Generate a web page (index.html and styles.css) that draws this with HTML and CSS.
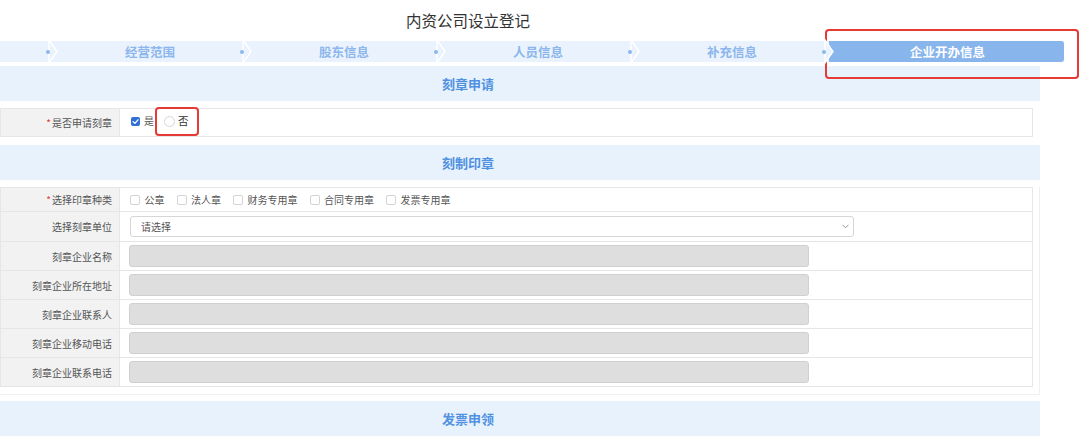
FILE: index.html
```html
<!DOCTYPE html>
<html lang="zh-CN">
<head>
<meta charset="utf-8">
<title>内资公司设立登记</title>
<link rel="stylesheet" href="styles.css">
</head>
<body>
<div class="title">内资公司设立登记</div>

<div class="steps">
  <div class="step lead"><i class="dot"></i><svg class="chev" viewBox="0 0 11 21" width="11" height="21"><polygon points="2,-1 10,10.5 2,22" /></svg></div>
  <div class="step"><span>经营范围</span><i class="dot"></i><svg class="chev" viewBox="0 0 11 21" width="11" height="21"><polygon points="2,-1 10,10.5 2,22" /></svg></div>
  <div class="step"><span>股东信息</span><i class="dot"></i><svg class="chev" viewBox="0 0 11 21" width="11" height="21"><polygon points="2,-1 10,10.5 2,22" /></svg></div>
  <div class="step"><span>人员信息</span><i class="dot"></i><svg class="chev" viewBox="0 0 11 21" width="11" height="21"><polygon points="2,-1 10,10.5 2,22" /></svg></div>
  <div class="step"><span>补充信息</span><i class="dot"></i><svg class="chev" viewBox="0 0 11 21" width="11" height="21"><polygon points="2,-1 10,10.5 2,22" /></svg></div>
  <div class="step active"><span>企业开办信息</span></div>
</div>

<div class="sec-head head-1">刻章申请</div>
<div class="form form-1">
  <div class="row">
    <div class="label"><em>*</em>是否申请刻章</div>
    <div class="field opts-1">
      <span class="cb checked"><svg viewBox="0 0 9 9" width="9" height="9"><polyline points="2,4.6 3.9,6.4 7,2.8" /></svg></span>
      <span class="opt-text">是</span>
      <span class="annot"><span class="radio"></span><span class="opt-text">否</span></span>
    </div>
  </div>
</div>

<div class="sec-head head-2">刻制印章</div>
<div class="wrap">
  <div class="form">
    <div class="row r-opts">
      <div class="label"><em>*</em>选择印章种类</div>
      <div class="field opts">
        <span class="opt"><span class="cb"></span>公章</span>
        <span class="opt"><span class="cb"></span>法人章</span>
        <span class="opt"><span class="cb"></span>财务专用章</span>
        <span class="opt"><span class="cb"></span>合同专用章</span>
        <span class="opt"><span class="cb"></span>发票专用章</span>
      </div>
    </div>
    <div class="row r-select">
      <div class="label">选择刻章单位</div>
      <div class="field f-select">
        <div class="select"><span>请选择</span><svg viewBox="0 0 7 5" width="7" height="5"><polyline points="0.5,0.8 3.5,3.8 6.5,0.8" /></svg></div>
      </div>
    </div>
    <div class="row r-input">
      <div class="label">刻章企业名称</div>
      <div class="field f-input"><div class="input"></div></div>
    </div>
    <div class="row r-input">
      <div class="label">刻章企业所在地址</div>
      <div class="field f-input"><div class="input"></div></div>
    </div>
    <div class="row r-input">
      <div class="label">刻章企业联系人</div>
      <div class="field f-input"><div class="input"></div></div>
    </div>
    <div class="row r-input">
      <div class="label">刻章企业移动电话</div>
      <div class="field f-input"><div class="input"></div></div>
    </div>
    <div class="row r-input">
      <div class="label">刻章企业联系电话</div>
      <div class="field f-input"><div class="input"></div></div>
    </div>
  </div>
</div>

<div class="sec-head head-3">发票申领</div>
</body>
</html>
```

FILE: styles.css
```css
* { box-sizing: border-box; }

html, body {
  margin: 0;
  padding: 0;
  background: #ffffff;
  font-family: "Noto Sans CJK SC", "Noto Sans", sans-serif;
  color: #333333;
  overflow: hidden;
}

.title {
  width: 936px;
  height: 41px;
  line-height: 40px;
  text-align: center;
  font-size: 15.5px;
  color: #333333;
}

/* ---------- steps ---------- */
.steps {
  display: flex;
  width: 1064px;
  height: 21px;
  background: #eaf3fd;
}

.step {
  position: relative;
  width: 194px;
  height: 21px;
  display: flex;
  align-items: center;
  justify-content: center;
  font-size: 12.5px;
  font-weight: bold;
  color: #8cb6ec;
  flex: none;
}

.step.lead { width: 53px; }

.step .dot {
  position: absolute;
  right: 3px;
  top: 8.5px;
  width: 4px;
  height: 4px;
  border-radius: 50%;
  background: #8cb6ec;
  z-index: 3;
}

.step .chev {
  position: absolute;
  right: -5px;
  top: 0;
  z-index: 2;
  overflow: visible;
}

.step .chev polygon {
  fill: #eaf3fd;
  stroke: #ffffff;
  stroke-width: 1.4;
}

.step.active {
  width: 235px;
  background: #89b5ed;
  color: #ffffff;
  border-radius: 0 3px 3px 0;
  padding-left: 2px;
}

.step.active::after {
  content: "";
  position: absolute;
  left: -4px;
  right: -15px;
  top: -12px;
  bottom: -17px;
  border: 2px solid #e53a35;
  border-radius: 4px;
}

/* ---------- section headers ---------- */
.sec-head {
  width: 1040px;
  height: 35px;
  background: #e8f2fd;
  display: flex;
  align-items: center;
  justify-content: center;
  padding-right: 104px;
  font-size: 13px;
  font-weight: bold;
  color: #5091e1;
}

.head-1 { margin-top: 4px; }
.head-2 { margin-top: 8px; }
.head-3 { margin-top: 6px; }

/* ---------- forms ---------- */
.form {
  width: 1033px;
  border: 1px solid #e6e6e6;
  border-bottom: none;
}

.form-1 {
  margin-top: 7px;
}

.wrap {
  width: 1040px;
  margin-top: 7px;
  padding: 0 6px 7px 0;
  border-right: 1px solid #f0f0f0;
  border-bottom: 1px solid #f0f0f0;
}

.row {
  display: grid;
  grid-template-columns: 119px 1fr;
  border-bottom: 1px solid #e6e6e6;
  height: 29px;
}

.form-1 .row { height: 28px; }
.r-opts { height: 24px; }
.r-select { height: 30px; }
.r-input { height: 29px; }

.label {
  background: #f2f2f2;
  border-right: 1px solid #e6e6e6;
  display: flex;
  align-items: center;
  justify-content: flex-end;
  padding-right: 7px;
  font-size: 10px;
  color: #555555;
}

.label em {
  font-style: normal;
  color: #e53a35;
  margin-right: 1px;
}

.field {
  display: flex;
  align-items: center;
  font-size: 10px;
  color: #555555;
}

/* row 1 */
.opts-1 { padding-left: 11px; }

.cb {
  display: inline-block;
  width: 10px;
  height: 10px;
  border: 1px solid #d4d4d4;
  border-radius: 2px;
  background: #ffffff;
  flex: none;
}

.cb.checked {
  width: 9px;
  height: 9px;
  border: none;
  background: #2f6fd6;
  display: inline-flex;
}

.cb.checked polyline {
  fill: none;
  stroke: #ffffff;
  stroke-width: 1.3;
  stroke-linecap: round;
  stroke-linejoin: round;
}

.opt-text { line-height: 14px; }

.opts-1 .cb.checked { margin-right: 4px; margin-top: -3px; }
.opts-1 > .opt-text { margin-top: -3px; }

.annot {
  position: relative;
  display: inline-flex;
  align-items: center;
  height: 14px;
  margin-left: 1px;
  margin-top: -3px;
  padding: 0 10px 0 9px;
  font-size: 10.5px;
  color: #333333;
}

.annot::after {
  content: "";
  position: absolute;
  left: 0;
  right: 0;
  top: -7px;
  height: 25px;
  border: 2px solid #e53a35;
  border-radius: 4px;
}

.radio {
  display: inline-block;
  width: 11px;
  height: 11px;
  border: 1px solid #d6d6d6;
  border-radius: 50%;
  background: #ffffff;
  margin-right: 3px;
}

/* options row */
.opts { padding-left: 10px; }

.opt {
  display: inline-flex;
  align-items: center;
  margin-right: 12px;
}

.opt .cb { margin-right: 4.5px; }

/* select */
.f-select { padding-left: 10px; }

.select {
  width: 724px;
  height: 21px;
  border: 1px solid #d6d6d6;
  border-radius: 3px;
  background: #ffffff;
  display: flex;
  align-items: center;
  justify-content: space-between;
  padding: 0 4px 0 10px;
  font-size: 10px;
  color: #555555;
}

.select polyline {
  fill: none;
  stroke: #888888;
  stroke-width: 0.9;
}

/* inputs */
.f-input { padding-left: 9px; }

.input {
  width: 680px;
  height: 22px;
  background: #dedede;
  border: 1px solid #d0d0d0;
  border-radius: 3px;
}
```
